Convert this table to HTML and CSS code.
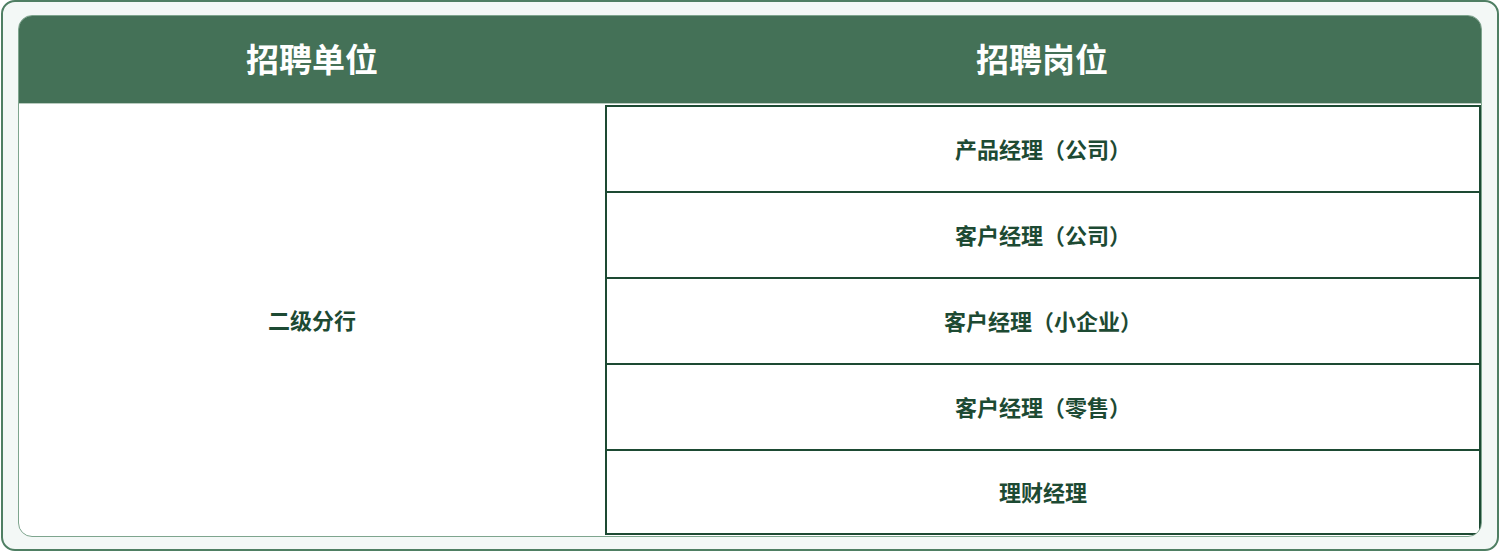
FILE: index.html
```html
<!DOCTYPE html>
<html lang="zh-CN">
<head>
<meta charset="utf-8">
<link rel="stylesheet" href="styles.css">
</head>
<body>
<div class="frame">
  <div class="panel">
    <div class="head">
      <div class="head-cell left">招聘单位</div>
      <div class="head-cell right">招聘岗位</div>
    </div>
    <div class="body">
      <div class="unit">二级分行</div>
      <div class="jobs">
        <div class="job">产品经理（公司）</div>
        <div class="job">客户经理（公司）</div>
        <div class="job">客户经理（小企业）</div>
        <div class="job">客户经理（零售）</div>
        <div class="job last">理财经理</div>
      </div>
    </div>
  </div>
</div>
</body>
</html>
```

FILE: styles.css
```css
html, body {
  margin: 0;
  padding: 0;
  background: #ffffff;
}
body {
  width: 1501px;
  height: 552px;
  overflow: hidden;
  font-family: "Noto Sans CJK SC", "Noto Sans", sans-serif;
}
.frame {
  box-sizing: border-box;
  margin-left: 1px;
  width: 1498px;
  height: 551px;
  border: 2px solid #4f7f63;
  border-radius: 14px;
  background: #f3f8f6;
  padding: 13px 15px 12px 15px;
  display: flex;
}
.panel {
  flex: 1;
  box-sizing: border-box;
  border: 1px solid #7ea58e;
  border-radius: 14px;
  background: #ffffff;
  overflow: hidden;
  display: flex;
  flex-direction: column;
}
.head {
  height: 87px;
  background: #447157;
  border-bottom: 1px solid #b9cbbf;
  display: grid;
  grid-template-columns: 586px 1fr;
  align-items: center;
  color: #ffffff;
  font-weight: 700;
  font-size: 33px;
  flex: none;
}
.head-cell {
  text-align: center;
  line-height: 1;
  padding-bottom: 2px;
}
.head-cell.right {
  padding-right: 2px;
}
.body {
  flex: 1;
  display: grid;
  grid-template-columns: 586px 1fr;
  padding-top: 1px;
  padding-bottom: 1px;
  color: #1d4a33;
  font-weight: 700;
  font-size: 22px;
}
.unit {
  display: flex;
  align-items: center;
  justify-content: center;
  padding-bottom: 2px;
}
.jobs {
  border: 2px solid #1d4a33;
  display: flex;
  flex-direction: column;
}
.job {
  box-sizing: border-box;
  height: 86px;
  border-bottom: 2px solid #1d4a33;
  display: flex;
  align-items: center;
  justify-content: center;
  padding-bottom: 2px;
}
.job.last {
  border-bottom: none;
  flex: 1;
  height: auto;
}
```
